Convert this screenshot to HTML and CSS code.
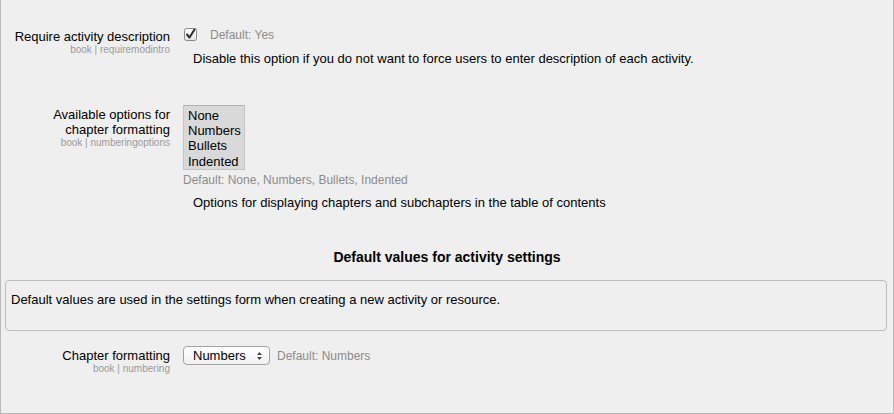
FILE: index.html
```html
<!DOCTYPE html>
<html lang="en">
<head>
    <meta charset="UTF-8">
    <meta name="viewport" content="width=device-width, initial-scale=1.0">
    <title>Book settings</title>
    <link rel="stylesheet" href="styles.css">
</head>
<body>
    <div class="page">
        <div class="setting first">
            <div class="label">
                <div class="title">Require activity description</div>
                <div class="name">book | requiremodintro</div>
            </div>
            <div class="field">
                <div class="control-line">
                    <span class="checkbox">
                        <svg width="13" height="13" viewBox="0 0 13 13">
                            <defs>
                                <linearGradient id="cb" x1="0" y1="0" x2="0" y2="1">
                                    <stop offset="0" stop-color="#ffffff"/>
                                    <stop offset="1" stop-color="#e4e4e4"/>
                                </linearGradient>
                            </defs>
                            <rect x="0.5" y="0.5" width="12" height="12" rx="2" fill="url(#cb)" stroke="#8a8a8a"/>
                            <path d="M3 6.5 L5.5 9.5 L10.5 1.5" fill="none" stroke="#2b2b2b" stroke-width="2" stroke-linecap="round" stroke-linejoin="round"/>
                        </svg>
                    </span>
                    <span class="default">Default: Yes</span>
                </div>
                <div class="description">Disable this option if you do not want to force users to enter description of each activity.</div>
            </div>
        </div>

        <div class="setting second">
            <div class="label">
                <div class="title">Available options for<br>chapter formatting</div>
                <div class="name">book | numberingoptions</div>
            </div>
            <div class="field">
                <div class="listbox">
                    <div>None</div>
                    <div>Numbers</div>
                    <div>Bullets</div>
                    <div>Indented</div>
                </div>
                <div class="default below">Default: None, Numbers, Bullets, Indented</div>
                <div class="description after-default">Options for displaying chapters and subchapters in the table of contents</div>
            </div>
        </div>

        <h3 class="heading">Default values for activity settings</h3>
        <div class="info-box">Default values are used in the settings form when creating a new activity or resource.</div>

        <div class="setting third">
            <div class="label">
                <div class="title">Chapter formatting</div>
                <div class="name">book | numbering</div>
            </div>
            <div class="field">
                <div class="control-line">
                    <span class="select">
                        Numbers
                        <svg class="arrows" width="7" height="10" viewBox="0 0 7 10">
                            <path d="M3.5 1 L6 4 L1 4 Z" fill="#444"/>
                            <path d="M3.5 9 L6 6 L1 6 Z" fill="#444"/>
                        </svg>
                    </span>
                    <span class="default">Default: Numbers</span>
                </div>
            </div>
        </div>
    </div>
</body>
</html>
```

FILE: styles.css
```css
* {
    margin: 0;
    padding: 0;
    box-sizing: border-box;
}

body {
    font-family: 'Liberation Sans', Arial, sans-serif;
    background-color: #efefef;
    color: #000;
}

.page {
    width: 894px;
    height: 414px;
    background-color: #efefef;
    border: 1px solid #b9b9b9;
    border-top: none;
    padding-top: 27px;
}

.setting {
    display: flex;
}

.second {
    margin-top: 39px;
}

.third {
    margin-top: 15px;
}

.label {
    width: 169px;
    text-align: right;
    padding-top: 2px;
}

.title {
    font-size: 13px;
    line-height: 15px;
}

.name {
    font-size: 10px;
    line-height: 12px;
    color: #9a9a9a;
}

.field {
    margin-left: 13px;
}

.control-line {
    display: flex;
    align-items: center;
    height: 15px;
}

.third .control-line {
    height: 19px;
}

.checkbox {
    display: flex;
    margin-left: 1px;
    margin-right: 13px;
}

.default {
    font-size: 12px;
    line-height: 14px;
    color: #8c8c8c;
}

.description {
    font-size: 13px;
    line-height: 15px;
    padding-left: 10px;
    margin-top: 9px;
}

.listbox {
    width: 62px;
    height: 65px;
    background-color: #d9d9d9;
    border: 1px solid #c4c4c4;
    border-top-color: #b0b0b0;
    padding: 2px 4px;
    font-size: 13px;
    line-height: 15.2px;
}

.below {
    margin-top: 3px;
}

.after-default {
    margin-top: 8px;
}

.heading {
    font-size: 14px;
    line-height: 15px;
    font-weight: bold;
    text-align: center;
    margin-top: 40px;
}

.info-box {
    margin: 15px 6px 0 4px;
    height: 51px;
    border: 1px solid #bdbdbd;
    border-radius: 4px;
    padding: 11px 5px 0;
    font-size: 13px;
    line-height: 15px;
}

.select {
    display: flex;
    align-items: center;
    width: 87px;
    height: 19px;
    border: 1px solid #a3a3a3;
    border-radius: 4px;
    background: linear-gradient(#ffffff, #f1f1f1);
    padding-left: 9px;
    font-size: 13px;
    margin-right: 7px;
}

.arrows {
    margin-left: auto;
    margin-right: 6px;
}
```
